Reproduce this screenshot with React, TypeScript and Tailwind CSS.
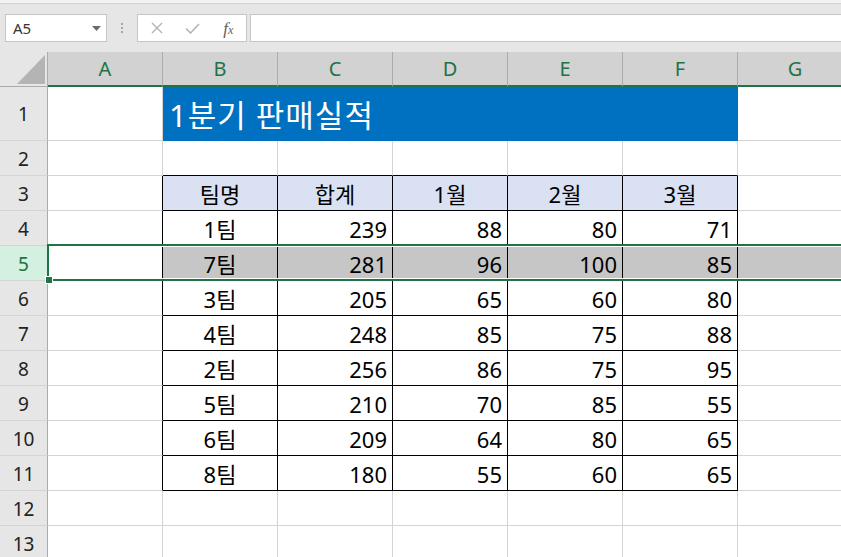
import React from "react";

const COLS = ["A", "B", "C", "D", "E", "F", "G"];

type Row = [string, number, number, number, number];
const DATA: Row[] = [
  ["1팀", 239, 88, 80, 71],
  ["7팀", 281, 96, 100, 85],
  ["3팀", 205, 65, 60, 80],
  ["4팀", 248, 85, 75, 88],
  ["2팀", 256, 86, 75, 95],
  ["5팀", 210, 70, 85, 55],
  ["6팀", 209, 64, 80, 65],
  ["8팀", 180, 55, 60, 65],
];
const HEAD = ["팀명", "합계", "1월", "2월", "3월"];

function cellContent(r: number, c: number): { text: string; align: "center" | "right" } | null {
  if (r === 3 && c >= 1 && c <= 5) return { text: HEAD[c - 1], align: "center" };
  if (r >= 4 && r <= 11 && c >= 1 && c <= 5) {
    const row = DATA[r - 4];
    const v = row[c - 1];
    return { text: String(v), align: c === 1 ? "center" : "right" };
  }
  return null;
}

function Cell({ r, c }: { r: number; c: number }) {
  const inTable = r >= 3 && r <= 11;
  const rightBlack = inTable && c >= 0 && c <= 5;
  const bottomBlack = r >= 2 && r <= 11 && c >= 1 && c <= 5;
  let bg = "bg-white";
  if (r === 5 && c >= 1) bg = "bg-[#c6c6c6]";
  else if (r === 3 && c >= 1 && c <= 5) bg = "bg-[#d9e1f2]";
  const content = cellContent(r, c);
  return (
    <div
      className={[
        "w-[115px] shrink-0 h-full border-r border-b flex items-center px-[5px] text-[22px] leading-none text-black",
        rightBlack ? "border-r-black" : "border-r-[#d4d4d4]",
        bottomBlack ? "border-b-black" : "border-b-[#d4d4d4]",
        bg,
        content && content.align === "right" ? "justify-end" : "justify-center",
      ].join(" ")}
    >
      {content ? <span className="pt-[1px]">{content.text}</span> : null}
    </div>
  );
}

function RowHeader({ n }: { n: number }) {
  const sel = n === 5;
  return (
    <div
      className={[
        "w-[48px] shrink-0 h-full border-r border-r-[#ababab] border-b border-b-[#d4d4d4] flex items-center justify-center text-[19px] leading-none",
        sel ? "bg-[#d3f0e0] text-[#217346]" : "bg-[#e6e6e6] text-[#222222]",
      ].join(" ")}
    >
      <span className="pt-[2px]">{n}</span>
    </div>
  );
}

export default function App() {
  const rows = [1, 2, 3, 4, 5, 6, 7, 8, 9, 10, 11, 12, 13];
  return (
    <div className="relative w-[841px] h-[557px] overflow-hidden bg-white font-['Noto_Sans','Noto_Sans_CJK_KR',sans-serif]">
      {/* Formula bar */}
      <div className="h-[52px] bg-[#e6e6e6] flex flex-col">
        <div className="h-[4px] bg-[#f3f3f3] border-b border-b-[#d2d2d2]" />
        <div className="flex items-center pt-[10px]">
          <div className="ml-[5px] w-[102px] h-[28px] bg-white border border-[#c6c6c6] flex items-center justify-between pl-[7px] pr-[5px]">
            <span className="text-[15px] leading-none text-[#333333]">A5</span>
            <svg width="9" height="5" viewBox="0 0 9 5">
              <path d="M0 0 L9 0 L4.5 5 Z" fill="#6b6b6b" />
            </svg>
          </div>
          <div className="w-[30px] h-[28px] flex flex-col items-center justify-center gap-[2px]">
            <div className="w-[2px] h-[2px] bg-[#a6a6a6]" />
            <div className="w-[2px] h-[2px] bg-[#a6a6a6]" />
            <div className="w-[2px] h-[2px] bg-[#a6a6a6]" />
          </div>
          <div className="w-[110px] h-[28px] bg-white border border-[#c6c6c6] flex items-center pl-[1px]">
            <div className="w-[36px] flex justify-center">
              <svg width="12" height="12" viewBox="0 0 12 12">
                <path d="M1 1 L11 11 M11 1 L1 11" stroke="#b4b4b4" strokeWidth="1.4" fill="none" />
              </svg>
            </div>
            <div className="w-[36px] flex justify-center">
              <svg width="15" height="11" viewBox="0 0 15 11">
                <path d="M1 5.5 L5.5 10 L14 1" stroke="#b4b4b4" strokeWidth="1.6" fill="none" />
              </svg>
            </div>
            <div className="w-[36px] flex justify-center">
              <span className="font-['Liberation_Serif',serif] italic text-[17px] leading-none text-[#606060]">
                f<span className="text-[12px]">x</span>
              </span>
            </div>
          </div>
          <div className="ml-[3px] flex-1 h-[28px] bg-white border border-[#c6c6c6] border-r-0" />
        </div>
      </div>

      {/* Column header */}
      <div className="flex h-[35px]">
        <div className="w-[48px] shrink-0 h-full bg-[#e6e6e6] border-r border-r-[#ababab] border-b border-b-[#ababab] relative">
          <svg className="absolute left-[17px] top-[3px]" width="28" height="29" viewBox="0 0 28 29">
            <path d="M0 29 L28 29 L28 0 Z" fill="#b4b4b4" />
          </svg>
        </div>
        {COLS.map((c) => (
          <div
            key={c}
            className="w-[115px] shrink-0 h-full bg-[#d2d2d2] border-r border-r-[#ababab] border-b-2 border-b-[#217346] flex items-center justify-center text-[20px] leading-none text-[#217346]"
          >
            <span className="pt-[1px]">{c}</span>
          </div>
        ))}
      </div>

      {/* Rows */}
      {rows.map((r) => (
        <div key={r} className={["flex", r === 1 ? "h-[54px]" : "h-[35px]"].join(" ")}>
          <RowHeader n={r} />
          {r === 1 ? (
            <>
              <Cell r={1} c={0} />
              <div className="w-[575px] shrink-0 h-full bg-[#0070c0] flex items-center pl-[6px] text-[31px] tracking-[1px] leading-none text-white">
                <span className="pt-[3px]">1분기 판매실적</span>
              </div>
              <Cell r={1} c={6} />
            </>
          ) : (
            COLS.map((_, c) => <Cell key={c} r={r} c={c} />)
          )}
        </div>
      ))}

      {/* Selection overlay for row 5 */}
      <div className="absolute left-[47px] top-[244px] right-0 h-[37px] border-t-2 border-b-2 border-l-2 border-[#217346] shadow-[inset_0_1px_0_#ffffff,inset_0_-1px_0_#ffffff] pointer-events-none" />
      <div className="absolute left-[45px] top-[276px] w-[8px] h-[8px] bg-[#217346] border border-white pointer-events-none" />
    </div>
  );
}
